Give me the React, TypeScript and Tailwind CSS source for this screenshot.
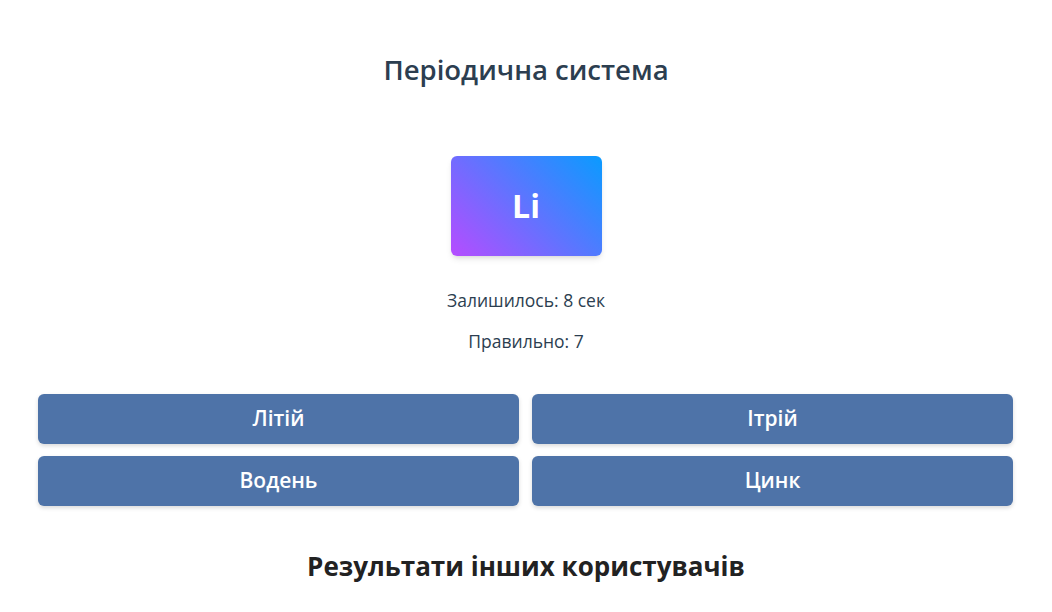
export default function App() {
  const options = ['Літій', 'Ітрій', 'Водень', 'Цинк']

  return (
    <div className="min-h-screen bg-white text-[#2c3e50]" style={{ fontFamily: '"Open Sans", "Noto Sans", sans-serif' }}>
      <div className="px-[38px] pt-[52px]">
        <h1 className="text-center text-[27.5px] font-semibold leading-[36px]">Періодична система</h1>

        <div className="mt-[68px] flex justify-center">
          <div className="flex h-[100px] w-[151px] items-center justify-center rounded-md bg-[linear-gradient(45deg,#b64cff,#0a9bff)] shadow-md">
            <span className="text-[32px] font-bold text-white">Li</span>
          </div>
        </div>

        <p className="mt-[31px] text-center text-[17.5px] leading-[26px]">Залишилось: 8 сек</p>
        <p className="mt-[15px] text-center text-[17.5px] leading-[26px]">Правильно: 7</p>

        <div className="mt-[40px] grid grid-cols-2 gap-x-[13px] gap-y-[12px] pr-px">
          {options.map((o) => (
            <button
              key={o}
              className="h-[50px] rounded-md bg-[#4e73a8] text-[21px] font-semibold text-white shadow-[0_2px_4px_rgba(0,0,0,0.15)]"
            >
              {o}
            </button>
          ))}
        </div>

        <h2 className="mt-[41px] text-center text-[26px] font-bold leading-[38px] text-[#222]">Результати інших користувачів</h2>
      </div>
    </div>
  )
}
